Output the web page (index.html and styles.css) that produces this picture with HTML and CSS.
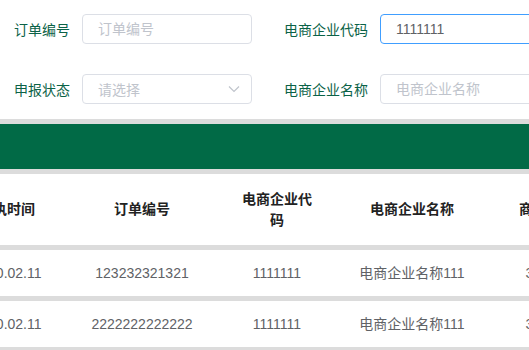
FILE: index.html
```html
<!DOCTYPE html>
<html lang="zh-CN">
<head>
  <meta charset="UTF-8" />
  <meta name="viewport" content="width=device-width, initial-scale=1.0"/>
  <title>订单查询</title>
  <link rel="stylesheet" href="styles.css">
</head>
<body>
  <form class="search">
    <div class="search-row">
      <div class="field">
        <label>订单编号</label>
        <input type="text" placeholder="订单编号" />
      </div>
      <div class="field">
        <label>电商企业代码</label>
        <input type="text" class="focused" value="1111111" />
      </div>
    </div>
    <div class="search-row">
      <div class="field">
        <label>申报状态</label>
        <div class="select">
          <span class="placeholder">请选择</span>
          <svg class="arrow" width="12" height="8" viewBox="0 0 12 8"><path d="M1 1.5 L6 6.5 L11 1.5" fill="none" stroke="#c0c4cc" stroke-width="1.2"/></svg>
        </div>
      </div>
      <div class="field">
        <label>电商企业名称</label>
        <input type="text" placeholder="电商企业名称" />
      </div>
    </div>
  </form>

  <div class="toolbar"></div>

  <div class="table-wrap">
    <table class="grid">
      <colgroup>
        <col style="width:100px">
        <col style="width:170px">
        <col style="width:100px">
        <col style="width:170px">
        <col style="width:100px">
      </colgroup>
      <thead>
        <tr>
          <th>回执时间</th>
          <th>订单编号</th>
          <th>电商企业代码</th>
          <th>电商企业名称</th>
          <th>商品总价</th>
        </tr>
      </thead>
      <tbody>
        <tr>
          <td>2020.02.11</td>
          <td>123232321321</td>
          <td>1111111</td>
          <td>电商企业名称111</td>
          <td>300.00</td>
        </tr>
        <tr>
          <td>2020.02.11</td>
          <td>2222222222222</td>
          <td>1111111</td>
          <td>电商企业名称111</td>
          <td>300.00</td>
        </tr>
      </tbody>
    </table>
  </div>
</body>
</html>
```

FILE: styles.css
```css
body { margin: 0; font-family: "Liberation Sans", Arial, "Noto Sans CJK SC", sans-serif; font-size: 14px; color: #606266; overflow: hidden; }

.search { padding: 14px 0 15px 14px; display: flex; flex-direction: column; gap: 30px; overflow: hidden; }
.search-row { display: flex; }
.field { display: flex; align-items: center; width: 270px; flex-shrink: 0; }
.field label { color: #0b6247; padding-right: 12px; white-space: nowrap; }
.field input, .select { box-sizing: border-box; width: 170px; height: 30px; flex-shrink: 0; border: 1px solid #dcdfe6; border-radius: 4px; padding: 0 15px; font: inherit; color: #606266; outline: none; }
.field input::placeholder { color: #c0c4cc; }
.field input.focused { border-color: #409eff; }
.select { display: flex; align-items: center; justify-content: space-between; padding-right: 11px; }
.select .placeholder { color: #c0c4cc; }

.toolbar { height: 45px; background: #016a46; border-top: 5px solid #dcdcdc; border-bottom: 5px solid #dcdcdc; }

.table-wrap { overflow: hidden; }
.grid { margin-left: -43px; border-collapse: collapse; table-layout: fixed; width: 640px; }
.grid th, .grid td { text-align: center; padding: 0 10px; border-bottom: 5px solid #dcdcdc; }
.grid th { height: 71px; color: #222; font-weight: bold; line-height: 21px; }
.grid td { height: 46px; line-height: 22px; }
```
